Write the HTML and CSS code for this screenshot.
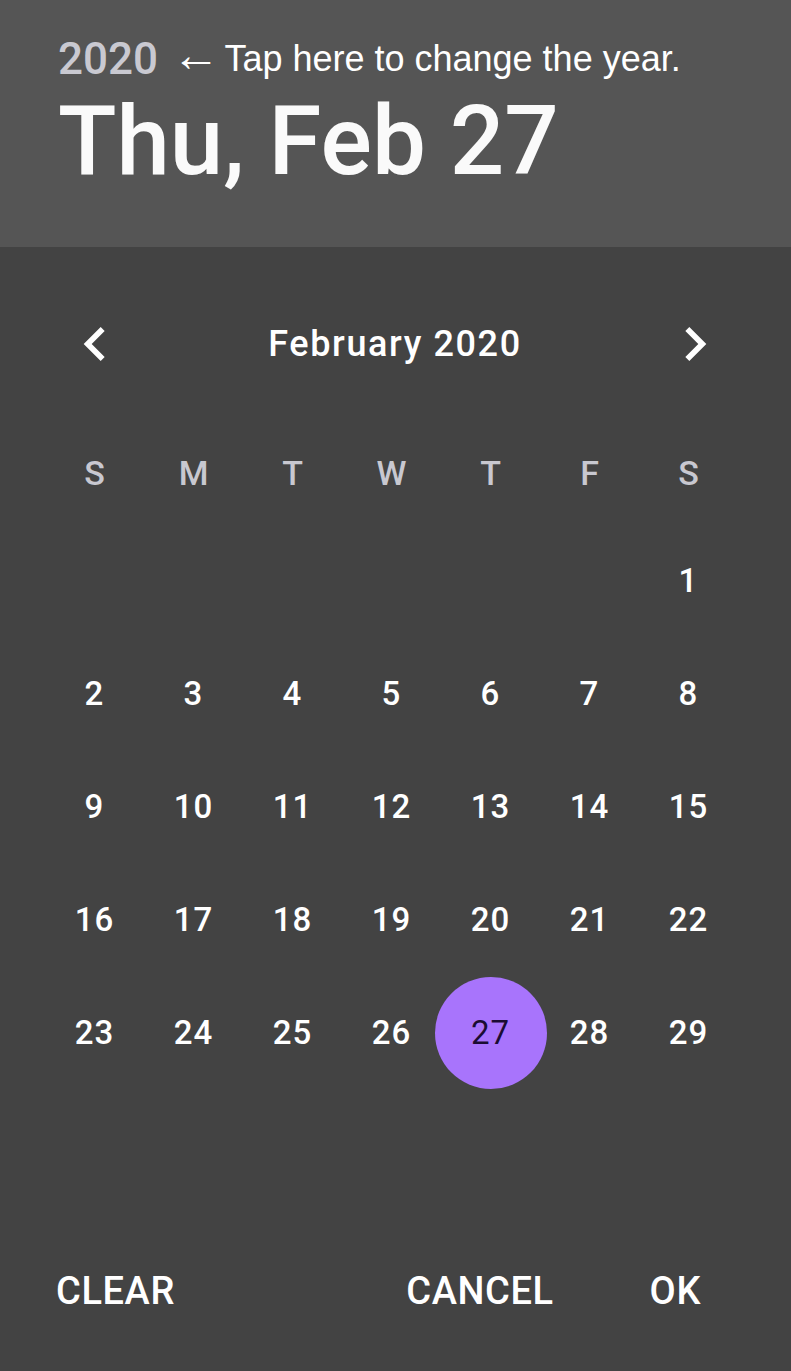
FILE: index.html
```html
<!DOCTYPE html>
<html lang="en">
<head>
<meta charset="utf-8">
<title>Date picker</title>
<link rel="stylesheet" href="styles.css">
</head>
<body>
<div class="picker">
  <header class="head">
    <div class="year-row"><span class="year">2020</span><span class="hint"><span class="arrow">←</span> Tap here to change the year.</span></div>
    <div class="date">Thu, Feb 27</div>
  </header>
  <section class="body">
    <div class="nav">
      <svg class="chev" viewBox="0 0 24 24"><path d="M15.41 7.41L14 6l-6 6 6 6 1.41-1.41L10.83 12z"/></svg>
      <div class="month">February 2020</div>
      <svg class="chev" viewBox="0 0 24 24"><path d="M10 6L8.59 7.41 13.17 12l-4.58 4.59L10 18l6-6z"/></svg>
    </div>
    <div class="week">
      <span>S</span><span>M</span><span>T</span><span>W</span><span>T</span><span>F</span><span>S</span>
    </div>
    <div class="days">
      <span></span><span></span><span></span><span></span><span></span><span></span><span>1</span>
      <span>2</span><span>3</span><span>4</span><span>5</span><span>6</span><span>7</span><span>8</span>
      <span>9</span><span>10</span><span>11</span><span>12</span><span>13</span><span>14</span><span>15</span>
      <span>16</span><span>17</span><span>18</span><span>19</span><span>20</span><span>21</span><span>22</span>
      <span>23</span><span>24</span><span>25</span><span>26</span><span><b class="sel">27</b></span><span>28</span><span>29</span>
    </div>
    <div class="actions">
      <span class="btn">Clear</span>
      <span class="btn cancel">Cancel</span>
      <span class="btn ok">OK</span>
    </div>
  </section>
</div>
</body>
</html>
```
FILE: styles.css
```css
html, body {
  margin: 0;
  padding: 0;
  background: #434343;
}
body {
  font-family: Roboto, "Noto Sans", sans-serif;
  color: #ffffff;
}
.picker {
  width: 791px;
  min-height: 1371px;
  background: #434343;
}
.head {
  box-sizing: border-box;
  height: 247px;
  background: #555555;
  padding: 31px 0 0 58px;
}
.year-row {
  height: 60px;
  line-height: 56px;
  font-size: 44px;
  white-space: nowrap;
}
.year {
  font-weight: 500;
  color: #c9c9d1;
}
.hint {
  font-family: "Liberation Sans", Arial, sans-serif;
  font-size: 36px;
  line-height: 40px;
  color: #ffffff;
  margin-left: 14px;
  vertical-align: 3px;
}
.arrow {
  font-size: 48px;
  line-height: 40px;
  margin-right: -5px;
}
.date {
  font-size: 96px;
  line-height: 100px;
  font-weight: 500;
  color: #fafafa;
  white-space: nowrap;
}
.body {
  padding-top: 63px;
}
.nav {
  height: 68px;
  display: flex;
  align-items: center;
  justify-content: space-between;
  padding: 0 62px 0 61px;
}
.chev {
  width: 68px;
  height: 68px;
  fill: #ffffff;
  flex: none;
}
.month {
  font-size: 36px;
  line-height: 68px;
  font-weight: 500;
  letter-spacing: 1.6px;
}
.week, .days {
  margin-left: 45px;
  width: 693px;
  display: grid;
  grid-template-columns: repeat(7, 99px);
}
.week {
  margin-top: 65px;
  height: 60px;
  line-height: 60px;
  font-size: 34px;
  font-weight: 500;
  color: #c8c8d0;
  text-align: center;
}
.days {
  margin-top: 21px;
  grid-auto-rows: 113px;
  font-size: 33px;
  font-weight: 500;
  letter-spacing: 1px;
}
.days span {
  display: flex;
  align-items: center;
  justify-content: center;
}
.sel {
  flex: none;
  width: 112px;
  height: 112px;
  border-radius: 50%;
  background: #a874fc;
  color: #1b0c33;
  font-weight: 400;
  display: flex;
  align-items: center;
  justify-content: center;
}
.actions {
  margin-top: 172px;
  height: 60px;
  display: flex;
  align-items: center;
  padding: 0 90px 0 56px;
  font-size: 38px;
  font-weight: 500;
  letter-spacing: 0.6px;
  text-transform: uppercase;
}
.btn {
  line-height: 60px;
}
.cancel {
  margin-left: auto;
}
.ok {
  margin-left: 96px;
}
```
